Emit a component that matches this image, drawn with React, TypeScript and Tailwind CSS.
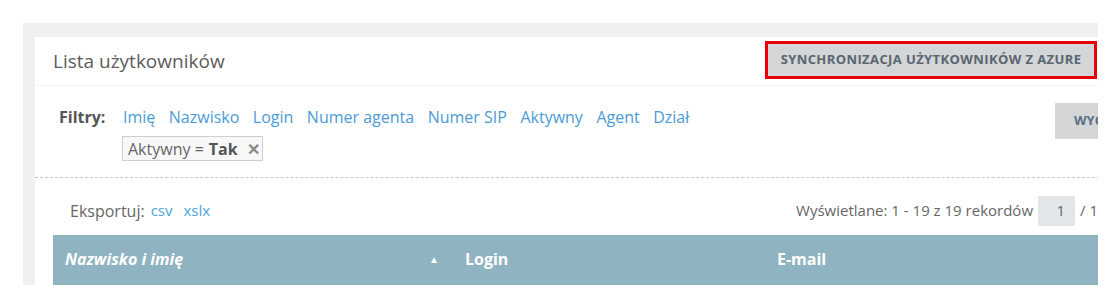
import React from 'react'

const filters = ['Imię', 'Nazwisko', 'Login', 'Numer agenta', 'Numer SIP', 'Aktywny', 'Agent', 'Dział']

export default function App() {
  return (
    <div className="h-[303px] w-[1111px] bg-white pl-[23px] pt-[23px] font-['Open_Sans',sans-serif]">
      <div className="h-[262px] w-[1075px] overflow-hidden bg-[#eff0f0] pl-3 pt-[14px]">
        <div className="h-full w-[1110px] bg-white">
          {/* header */}
          <div className="flex h-[49px] items-center border-b border-[#f4f4f4] pl-[18px]">
            <h1 className="text-[19px] text-[#5c5c5c]">Lista użytkowników</h1>
            <button className="ml-auto mr-[48px] mt-[-2px] h-[38px] w-[332px] border-[3px] border-[#e6000a] bg-[#d3d5d7] text-[13px] font-bold uppercase tracking-[0.4px] text-[#5a6570]">
              Synchronizacja użytkowników z Azure
            </button>
          </div>

          {/* filters */}
          <div className="flex h-[92px] border-b border-dashed border-[#c8c8c8] pl-[24px]">
            <div className="flex flex-col pt-[19px]">
              <div className="flex items-center text-[16px]">
                <span className="w-[64px] font-bold text-[#555]">Filtry:</span>
                <div className="flex gap-[13.5px] text-[#4b9bd6]">
                  {filters.map(f => (
                    <a key={f} className="cursor-pointer">{f}</a>
                  ))}
                </div>
              </div>
              <div className="ml-[63px] mt-[7px] flex h-[25px] w-[141px] items-center border border-[#cfcfcf] bg-[#f8f8f8] pl-[5px] text-[16px] text-[#666]">
                <span>Aktywny =</span>
                <span className="ml-[5px] font-bold text-[#555]">Tak</span>
                <span className="ml-[9px] text-[16px] font-bold leading-none text-[#8a8a8a]">✕</span>
              </div>
            </div>
            <div className="ml-auto mt-[17px] flex h-[36px] w-[90px] items-center bg-[#d4d6d8] pl-[19px] text-[13px] font-bold text-[#5a6e88]">
              WYCZYŚĆ
            </div>
          </div>

          {/* export row */}
          <div className="flex h-[57px] items-center pl-[35px] pt-[8px] text-[15px]">
            <span className="text-[16px] text-[#666]">Eksportuj:</span>
            <a className="ml-[6px] text-[#4ba6e0]">csv</a>
            <a className="ml-[11px] text-[#4ba6e0]">xslx</a>
            <span className="ml-auto text-[#666]">Wyświetlane: 1 - 19 z 19 rekordów</span>
            <div className="ml-[5px] flex h-[30px] w-[37px] items-center justify-end bg-[#e3e6e8] pr-[10px] text-[#666]">1</div>
            <span className="ml-[5px] mr-[47px] text-[#666]">/ 1</span>
          </div>

          {/* table header */}
          <div className="ml-[18px] flex h-[50px] items-center bg-[#8fb3c1] pb-[2px] text-[16px] font-bold text-white">
            <div className="flex w-[400px] items-center pl-[12px] pr-[14px]">
              <span className="italic">Nazwisko i imię</span>
              <span className="ml-auto text-[10px]">▲</span>
            </div>
            <div className="w-[324px] pl-[12px]">Login</div>
            <div>E-mail</div>
          </div>
        </div>
      </div>
    </div>
  )
}
